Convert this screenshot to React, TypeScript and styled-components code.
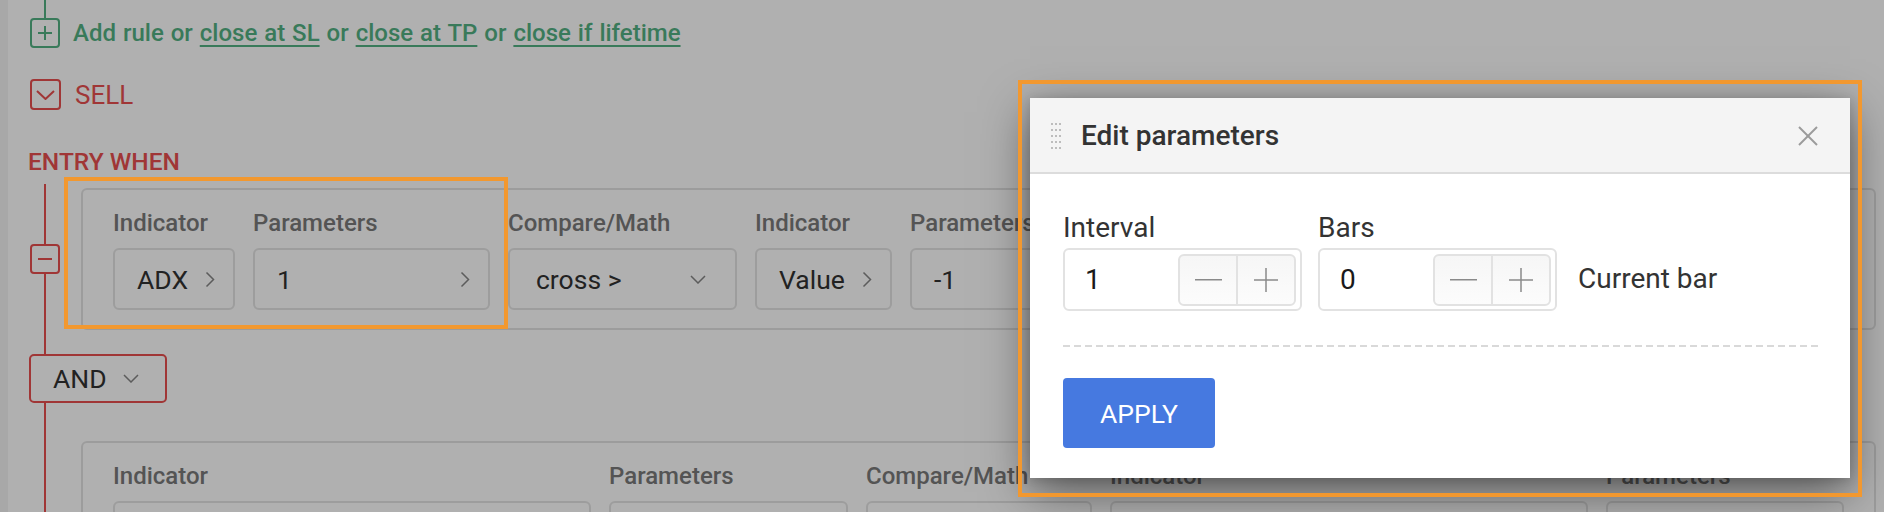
import React from "react";
import styled, { createGlobalStyle } from "styled-components";

const GlobalStyle = createGlobalStyle`
  html, body { margin: 0; padding: 0; }
  body {
    background: #b0b0b0;
    font-family: Roboto, "Liberation Sans", sans-serif;
  }
  * { box-sizing: border-box; }
`;

const GREEN = "#397a5a";
const RED = "#a03636";

const Page = styled.div`
  position: relative;
  display: flex;
  width: 1884px;
  height: 512px;
  overflow: hidden;
  background: #b0b0b0;
`;

const SideStrip = styled.div`
  flex: none;
  width: 8px;
  background: #a8a8a8;
`;

const Content = styled.div`
  flex: 1;
  display: flex;
  flex-direction: column;
  padding: 18px 9px 0 22px;
`;

const ActionRow = styled.div<{ $gap: number }>`
  display: flex;
  align-items: center;
  gap: ${(p) => p.$gap}px;
`;

const IconBox = styled.div<{ $color: string; $size: number; $stem?: boolean }>`
  position: relative;
  flex: none;
  display: flex;
  align-items: center;
  justify-content: center;
  width: ${(p) => p.$size}px;
  height: ${(p) => p.$size}px;
  border: 2px solid ${(p) => p.$color};
  border-radius: 4px;
  background: #b0b0b0;

  ${(p) =>
    p.$stem &&
    `
    &::before {
      content: "";
      position: absolute;
      left: 12px;
      top: -20px;
      width: 2px;
      height: 18px;
      background: ${p.$color};
    }
  `}
`;

const AddText = styled.div`
  font-size: 24px;
  font-weight: 500;
  color: ${GREEN};
  white-space: nowrap;
  word-spacing: 1px;
`;

const Link = styled.span`
  text-decoration: underline;
  text-decoration-thickness: 2px;
  text-underline-offset: 4px;
`;

const SellRow = styled(ActionRow)`
  margin-top: 31px;
`;

const SellText = styled.div`
  font-size: 26px;
  color: ${RED};
`;

const EntryTitle = styled.div`
  margin: 38px 0 0 -2px;
  font-size: 24.5px;
  line-height: 28px;
  font-weight: 500;
  color: ${RED};
`;

const Tree = styled.div`
  position: relative;
  display: flex;
  flex-direction: column;
  margin-top: 8px;
  padding-top: 4px;

  &::before {
    content: "";
    position: absolute;
    left: 14px;
    top: 0;
    bottom: -40px;
    width: 2px;
    background: ${RED};
  }
`;

const ConditionRow = styled.div<{ $indent?: number }>`
  position: relative;
  display: flex;
  align-items: center;
  gap: 21px;
  padding-left: ${(p) => p.$indent ?? 0}px;
`;

const Card = styled.div`
  flex: 1;
  border: 2px solid #9c9c9c;
  border-radius: 6px;
  padding: 19px 30px 18px 30px;
  min-height: 142px;
`;

const Fields = styled.div`
  display: flex;
  gap: 18px;
`;

const Field = styled.div<{ $width: number }>`
  display: flex;
  flex-direction: column;
  width: ${(p) => p.$width}px;
  flex: none;
`;

const FieldLabel = styled.div`
  font-size: 24px;
  line-height: 28px;
  font-weight: 500;
  color: #545454;
  white-space: nowrap;
  margin-bottom: 11px;
`;

const SelectBox = styled.div<{ $padLeft?: number; $padRight?: number }>`
  display: flex;
  align-items: center;
  justify-content: space-between;
  height: 62px;
  padding: 0 ${(p) => p.$padRight ?? 18}px 0 ${(p) => p.$padLeft ?? 22}px;
  border: 2px solid #9d9d9d;
  border-radius: 6px;
  font-size: 26.5px;
  color: #222;
  white-space: nowrap;
  overflow: hidden;
`;

const AndButton = styled.div`
  position: relative;
  display: flex;
  align-items: center;
  gap: 16px;
  width: 138px;
  height: 49px;
  margin: 24px 0 0 -1px;
  padding-left: 22px;
  border: 2px solid ${RED};
  border-radius: 5px;
  background: #b0b0b0;
  font-size: 26.5px;
  color: #222;
`;

const SecondRow = styled(ConditionRow)`
  margin-top: 38px;
`;

/* ---------- modal ---------- */

const Modal = styled.div`
  position: absolute;
  left: 1030px;
  top: 98px;
  width: 820px;
  display: flex;
  flex-direction: column;
  background: #fff;
  box-shadow: 0 14px 44px rgba(0, 0, 0, 0.5), 0 2px 10px rgba(0, 0, 0, 0.15);
`;

const ModalHeader = styled.div`
  display: flex;
  align-items: center;
  height: 76px;
  padding: 0 32px 0 21px;
  background: #f4f4f4;
  border-bottom: 2px solid #dcdcdc;
`;

const DragHandle = styled.div`
  display: grid;
  grid-template-columns: repeat(3, 2px);
  grid-auto-rows: 2px;
  column-gap: 2px;
  row-gap: 4px;
  margin-top: 2px;

  span {
    background: #bdbdbd;
  }
`;

const ModalTitle = styled.div`
  flex: 1;
  margin-left: 20px;
  font-size: 28px;
  font-weight: 500;
  color: #333;
`;

const CloseButton = styled.div`
  display: flex;
  width: 20px;
  height: 20px;
  margin-top: 2px;
`;

const ModalBody = styled.div`
  display: flex;
  flex-direction: column;
  padding: 39px 32px 30px 33px;
`;

const ParamRow = styled.div`
  display: flex;
  align-items: flex-end;
  gap: 16px;
`;

const ParamField = styled.div`
  display: flex;
  flex-direction: column;
`;

const ParamLabel = styled.div`
  font-size: 28px;
  line-height: 30px;
  color: #333;
  margin-bottom: 5px;
`;

const NumberInput = styled.div`
  display: flex;
  align-items: center;
  width: 239px;
  height: 63px;
  padding: 0 4px 0 20px;
  border: 2px solid #e2e2e2;
  border-radius: 6px;
  font-size: 28px;
  color: #1a1a1a;
`;

const Stepper = styled.div`
  display: flex;
  margin-left: auto;
  width: 118px;
  height: 52px;
  border: 2px solid #e2e2e2;
  border-radius: 6px;
  background: linear-gradient(#f6f6f6, #fcfcfc);
  overflow: hidden;
`;

const StepButton = styled.div`
  flex: 1;
  display: flex;
  align-items: center;
  justify-content: center;

  & + & {
    border-left: 2px solid #e2e2e2;
  }
`;

const ParamNote = styled.div`
  display: flex;
  align-items: center;
  height: 66px;
  margin-left: 5px;
  font-size: 28px;
  color: #333;
`;

const DashedRule = styled.div`
  height: 2px;
  margin-top: 34px;
  background: repeating-linear-gradient(
    to right,
    #d9d9d9 0 7px,
    transparent 7px 11px
  );
`;

const ApplyButton = styled.button`
  align-self: flex-start;
  width: 152px;
  height: 70px;
  margin-top: 31px;
  border: none;
  border-radius: 4px;
  background: #4679e0;
  color: #fff;
  font-family: Roboto, "Liberation Sans", sans-serif;
  font-size: 26.5px;
`;

/* ---------- annotation frames ---------- */

const Frame = styled.div<{ $l: number; $t: number; $w: number; $h: number }>`
  position: absolute;
  left: ${(p) => p.$l}px;
  top: ${(p) => p.$t}px;
  width: ${(p) => p.$w}px;
  height: ${(p) => p.$h}px;
  border: 4px solid #f2982f;
  pointer-events: none;
`;

/* ---------- icons ---------- */

const ChevronRight = () => (
  <svg width="10" height="17" viewBox="0 0 10 17" fill="none">
    <polyline points="1.5,1.5 8.5,8.5 1.5,15.5" stroke="#5c5c5c" strokeWidth="1.5" />
  </svg>
);

const ChevronDown = ({ color = "#5c5c5c", w = 16, h = 9, sw = 1.5 }: { color?: string; w?: number; h?: number; sw?: number }) => (
  <svg width={w} height={h} viewBox={`0 0 ${w} ${h}`} fill="none">
    <polyline points={`1,1 ${w / 2},${h - 1} ${w - 1},1`} stroke={color} strokeWidth={sw} />
  </svg>
);

const PlusIcon = ({ size, color, sw }: { size: number; color: string; sw: number }) => (
  <svg width={size} height={size} viewBox={`0 0 ${size} ${size}`}>
    <line x1="0" y1={size / 2} x2={size} y2={size / 2} stroke={color} strokeWidth={sw} />
    <line x1={size / 2} y1="0" x2={size / 2} y2={size} stroke={color} strokeWidth={sw} />
  </svg>
);

const MinusIcon = ({ size, color, sw }: { size: number; color: string; sw: number }) => (
  <svg width={size} height={sw + 2} viewBox={`0 0 ${size} ${sw + 2}`}>
    <line x1="0" y1={(sw + 2) / 2} x2={size} y2={(sw + 2) / 2} stroke={color} strokeWidth={sw} />
  </svg>
);

const CloseIcon = () => (
  <svg width="20" height="20" viewBox="0 0 20 20">
    <line x1="1" y1="1" x2="19" y2="19" stroke="#9b9b9b" strokeWidth="2" />
    <line x1="19" y1="1" x2="1" y2="19" stroke="#9b9b9b" strokeWidth="2" />
  </svg>
);

type Cond = { label: string; value: string; width: number; kind: "right" | "down" | "none" };

const firstRule: Cond[] = [
  { label: "Indicator", value: "ADX", width: 122, kind: "right" },
  { label: "Parameters", value: "1", width: 237, kind: "right" },
  { label: "Compare/Math", value: "cross >", width: 229, kind: "down" },
  { label: "Indicator", value: "Value", width: 137, kind: "right" },
  { label: "Parameters", value: "-1", width: 238, kind: "right" },
];

const secondRule: Cond[] = [
  { label: "Indicator", value: "", width: 478, kind: "none" },
  { label: "Parameters", value: "", width: 239, kind: "none" },
  { label: "Compare/Math", value: "", width: 226, kind: "none" },
  { label: "Indicator", value: "", width: 478, kind: "none" },
  { label: "Parameters", value: "", width: 238, kind: "none" },
];

const RuleFields = ({ items }: { items: Cond[] }) => (
  <Fields>
    {items.map((c, i) => (
      <Field key={i} $width={c.width}>
        <FieldLabel>{c.label}</FieldLabel>
        <SelectBox $padLeft={c.kind === "down" ? 26 : 22} $padRight={c.kind === "down" ? 29 : 18}>
          <span>{c.value}</span>
          {c.kind === "right" && <ChevronRight />}
          {c.kind === "down" && <ChevronDown />}
        </SelectBox>
      </Field>
    ))}
  </Fields>
);

const ParamInput = ({ label, value }: { label: string; value: string }) => (
  <ParamField>
    <ParamLabel>{label}</ParamLabel>
    <NumberInput>
      <span>{value}</span>
      <Stepper>
        <StepButton>
          <MinusIcon size={27} color="#8a8a8a" sw={1.5} />
        </StepButton>
        <StepButton>
          <PlusIcon size={24} color="#8a8a8a" sw={1.5} />
        </StepButton>
      </Stepper>
    </NumberInput>
  </ParamField>
);

const App = () => {
  return (
    <>
      <GlobalStyle />
      <Page>
        <SideStrip />
        <Content>
          <ActionRow $gap={13}>
            <IconBox $color={GREEN} $size={30} $stem>
              <PlusIcon size={14} color={GREEN} sw={2} />
            </IconBox>
            <AddText>
              Add rule or <Link>close at SL</Link> or <Link>close at TP</Link> or{" "}
              <Link>close if lifetime</Link>
            </AddText>
          </ActionRow>

          <SellRow $gap={14}>
            <IconBox $color={RED} $size={31}>
              <ChevronDown color={RED} w={19} h={10} sw={2} />
            </IconBox>
            <SellText>SELL</SellText>
          </SellRow>

          <EntryTitle>ENTRY WHEN</EntryTitle>

          <Tree>
            <ConditionRow>
              <IconBox $color={RED} $size={30}>
                <MinusIcon size={14} color={RED} sw={2} />
              </IconBox>
              <Card>
                <RuleFields items={firstRule} />
              </Card>
            </ConditionRow>

            <AndButton>
              AND
              <ChevronDown w={16} h={9} />
            </AndButton>

            <SecondRow $indent={51}>
              <Card>
                <RuleFields items={secondRule} />
              </Card>
            </SecondRow>
          </Tree>
        </Content>

        <Modal>
          <ModalHeader>
            <DragHandle>
              {Array.from({ length: 15 }).map((_, i) => (
                <span key={i} />
              ))}
            </DragHandle>
            <ModalTitle>Edit parameters</ModalTitle>
            <CloseButton>
              <CloseIcon />
            </CloseButton>
          </ModalHeader>
          <ModalBody>
            <ParamRow>
              <ParamInput label="Interval" value="1" />
              <ParamInput label="Bars" value="0" />
              <ParamNote>Current bar</ParamNote>
            </ParamRow>
            <DashedRule />
            <ApplyButton>APPLY</ApplyButton>
          </ModalBody>
        </Modal>

        <Frame $l={64} $t={177} $w={444} $h={152} />
        <Frame $l={1018} $t={80} $w={844} $h={417} />
      </Page>
    </>
  );
};

export default App;
